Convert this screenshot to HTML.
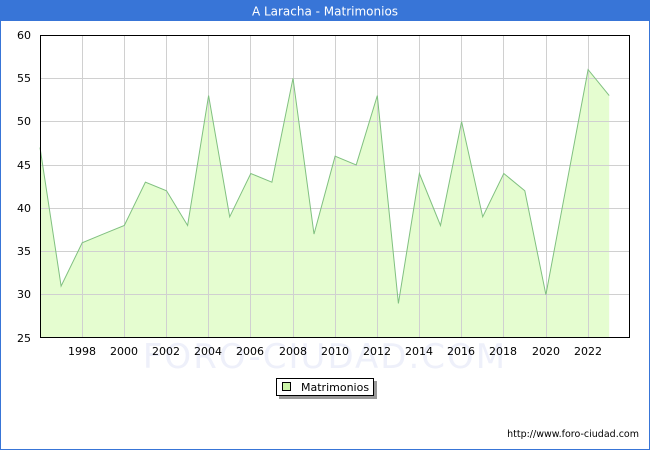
<!DOCTYPE html>
<html><head><meta charset="utf-8"><style>
html,body{margin:0;padding:0;width:650px;height:450px;overflow:hidden;background:#fff;font-family:"DejaVu Sans","Liberation Sans",sans-serif}
</style></head><body>
<svg width="650" height="450" xmlns="http://www.w3.org/2000/svg" style="position:absolute;left:0;top:0">
<rect x="0.5" y="0.5" width="649" height="449" fill="#fff" stroke="#3875d7"/>
<rect x="0" y="0" width="650" height="21" fill="#3875d7"/>
<text x="325" y="15.5" fill="#fff" font-size="12" text-anchor="middle">A Laracha - Matrimonios</text>
<polygon fill="#e5fdd0" stroke="none" points="40,338 40,147.5 61.1,286.1 82.2,242.8 103.2,234.1 124.3,225.5 145.4,182.2 166.5,190.8 187.6,225.5 208.6,95.6 229.7,216.8 250.8,173.5 271.9,182.2 293,78.3 314,234.1 335.1,156.2 356.2,164.9 377.3,95.6 398.4,303.4 419.4,173.5 440.5,225.5 461.6,121.6 482.7,216.8 503.8,173.5 524.8,190.8 545.9,294.7 567,182.2 588.1,69.6 609.2,95.6 609.2,338"/>
<g stroke="#d0d0d0" stroke-width="1">
<line x1="40" x2="630" y1="78.5" y2="78.5"/><line x1="40" x2="630" y1="121.5" y2="121.5"/><line x1="40" x2="630" y1="165.5" y2="165.5"/><line x1="40" x2="630" y1="208.5" y2="208.5"/><line x1="40" x2="630" y1="251.5" y2="251.5"/><line x1="40" x2="630" y1="294.5" y2="294.5"/>
<line y1="35" y2="338" x1="82.5" x2="82.5"/><line y1="35" y2="338" x1="124.5" x2="124.5"/><line y1="35" y2="338" x1="166.5" x2="166.5"/><line y1="35" y2="338" x1="208.5" x2="208.5"/><line y1="35" y2="338" x1="250.5" x2="250.5"/><line y1="35" y2="338" x1="293.5" x2="293.5"/><line y1="35" y2="338" x1="335.5" x2="335.5"/><line y1="35" y2="338" x1="377.5" x2="377.5"/><line y1="35" y2="338" x1="419.5" x2="419.5"/><line y1="35" y2="338" x1="461.5" x2="461.5"/><line y1="35" y2="338" x1="503.5" x2="503.5"/><line y1="35" y2="338" x1="546.5" x2="546.5"/><line y1="35" y2="338" x1="588.5" x2="588.5"/>
</g>
<polyline fill="none" stroke="#80c080" stroke-width="1" points="40,147.5 61.1,286.1 82.2,242.8 103.2,234.1 124.3,225.5 145.4,182.2 166.5,190.8 187.6,225.5 208.6,95.6 229.7,216.8 250.8,173.5 271.9,182.2 293,78.3 314,234.1 335.1,156.2 356.2,164.9 377.3,95.6 398.4,303.4 419.4,173.5 440.5,225.5 461.6,121.6 482.7,216.8 503.8,173.5 524.8,190.8 545.9,294.7 567,182.2 588.1,69.6 609.2,95.6"/>
<text x="325" y="368" fill="#eef0fa" font-size="34" text-anchor="middle" letter-spacing="2">FORO-CIUDAD.COM</text>
<rect x="40.5" y="35.5" width="589" height="302" fill="none" stroke="#000"/>
<g font-size="11" fill="#000" text-anchor="end">
<text x="31" y="39">60</text><text x="31" y="82">55</text><text x="31" y="125">50</text><text x="31" y="169">45</text><text x="31" y="212">40</text><text x="31" y="255">35</text><text x="31" y="298">30</text><text x="31" y="342">25</text>
</g>
<g font-size="11" fill="#000" text-anchor="middle">
<text x="82" y="355">1998</text><text x="124" y="355">2000</text><text x="166" y="355">2002</text><text x="208" y="355">2004</text><text x="250" y="355">2006</text><text x="293" y="355">2008</text><text x="335" y="355">2010</text><text x="377" y="355">2012</text><text x="419" y="355">2014</text><text x="461" y="355">2016</text><text x="503" y="355">2018</text><text x="546" y="355">2020</text><text x="588" y="355">2022</text>
</g>
<rect x="279" y="381" width="98" height="18" fill="#999"/>
<rect x="276.5" y="378.5" width="97" height="17" fill="#fff" stroke="#000"/>
<rect x="282.5" y="382.5" width="8" height="8" fill="#ccf5a8" stroke="#000"/>
<text x="301" y="391" font-size="11" fill="#000">Matrimonios</text>
<text x="639" y="437" font-size="9.5" fill="#000" text-anchor="end">http://www.foro-ciudad.com</text>
</svg>
</body></html>
